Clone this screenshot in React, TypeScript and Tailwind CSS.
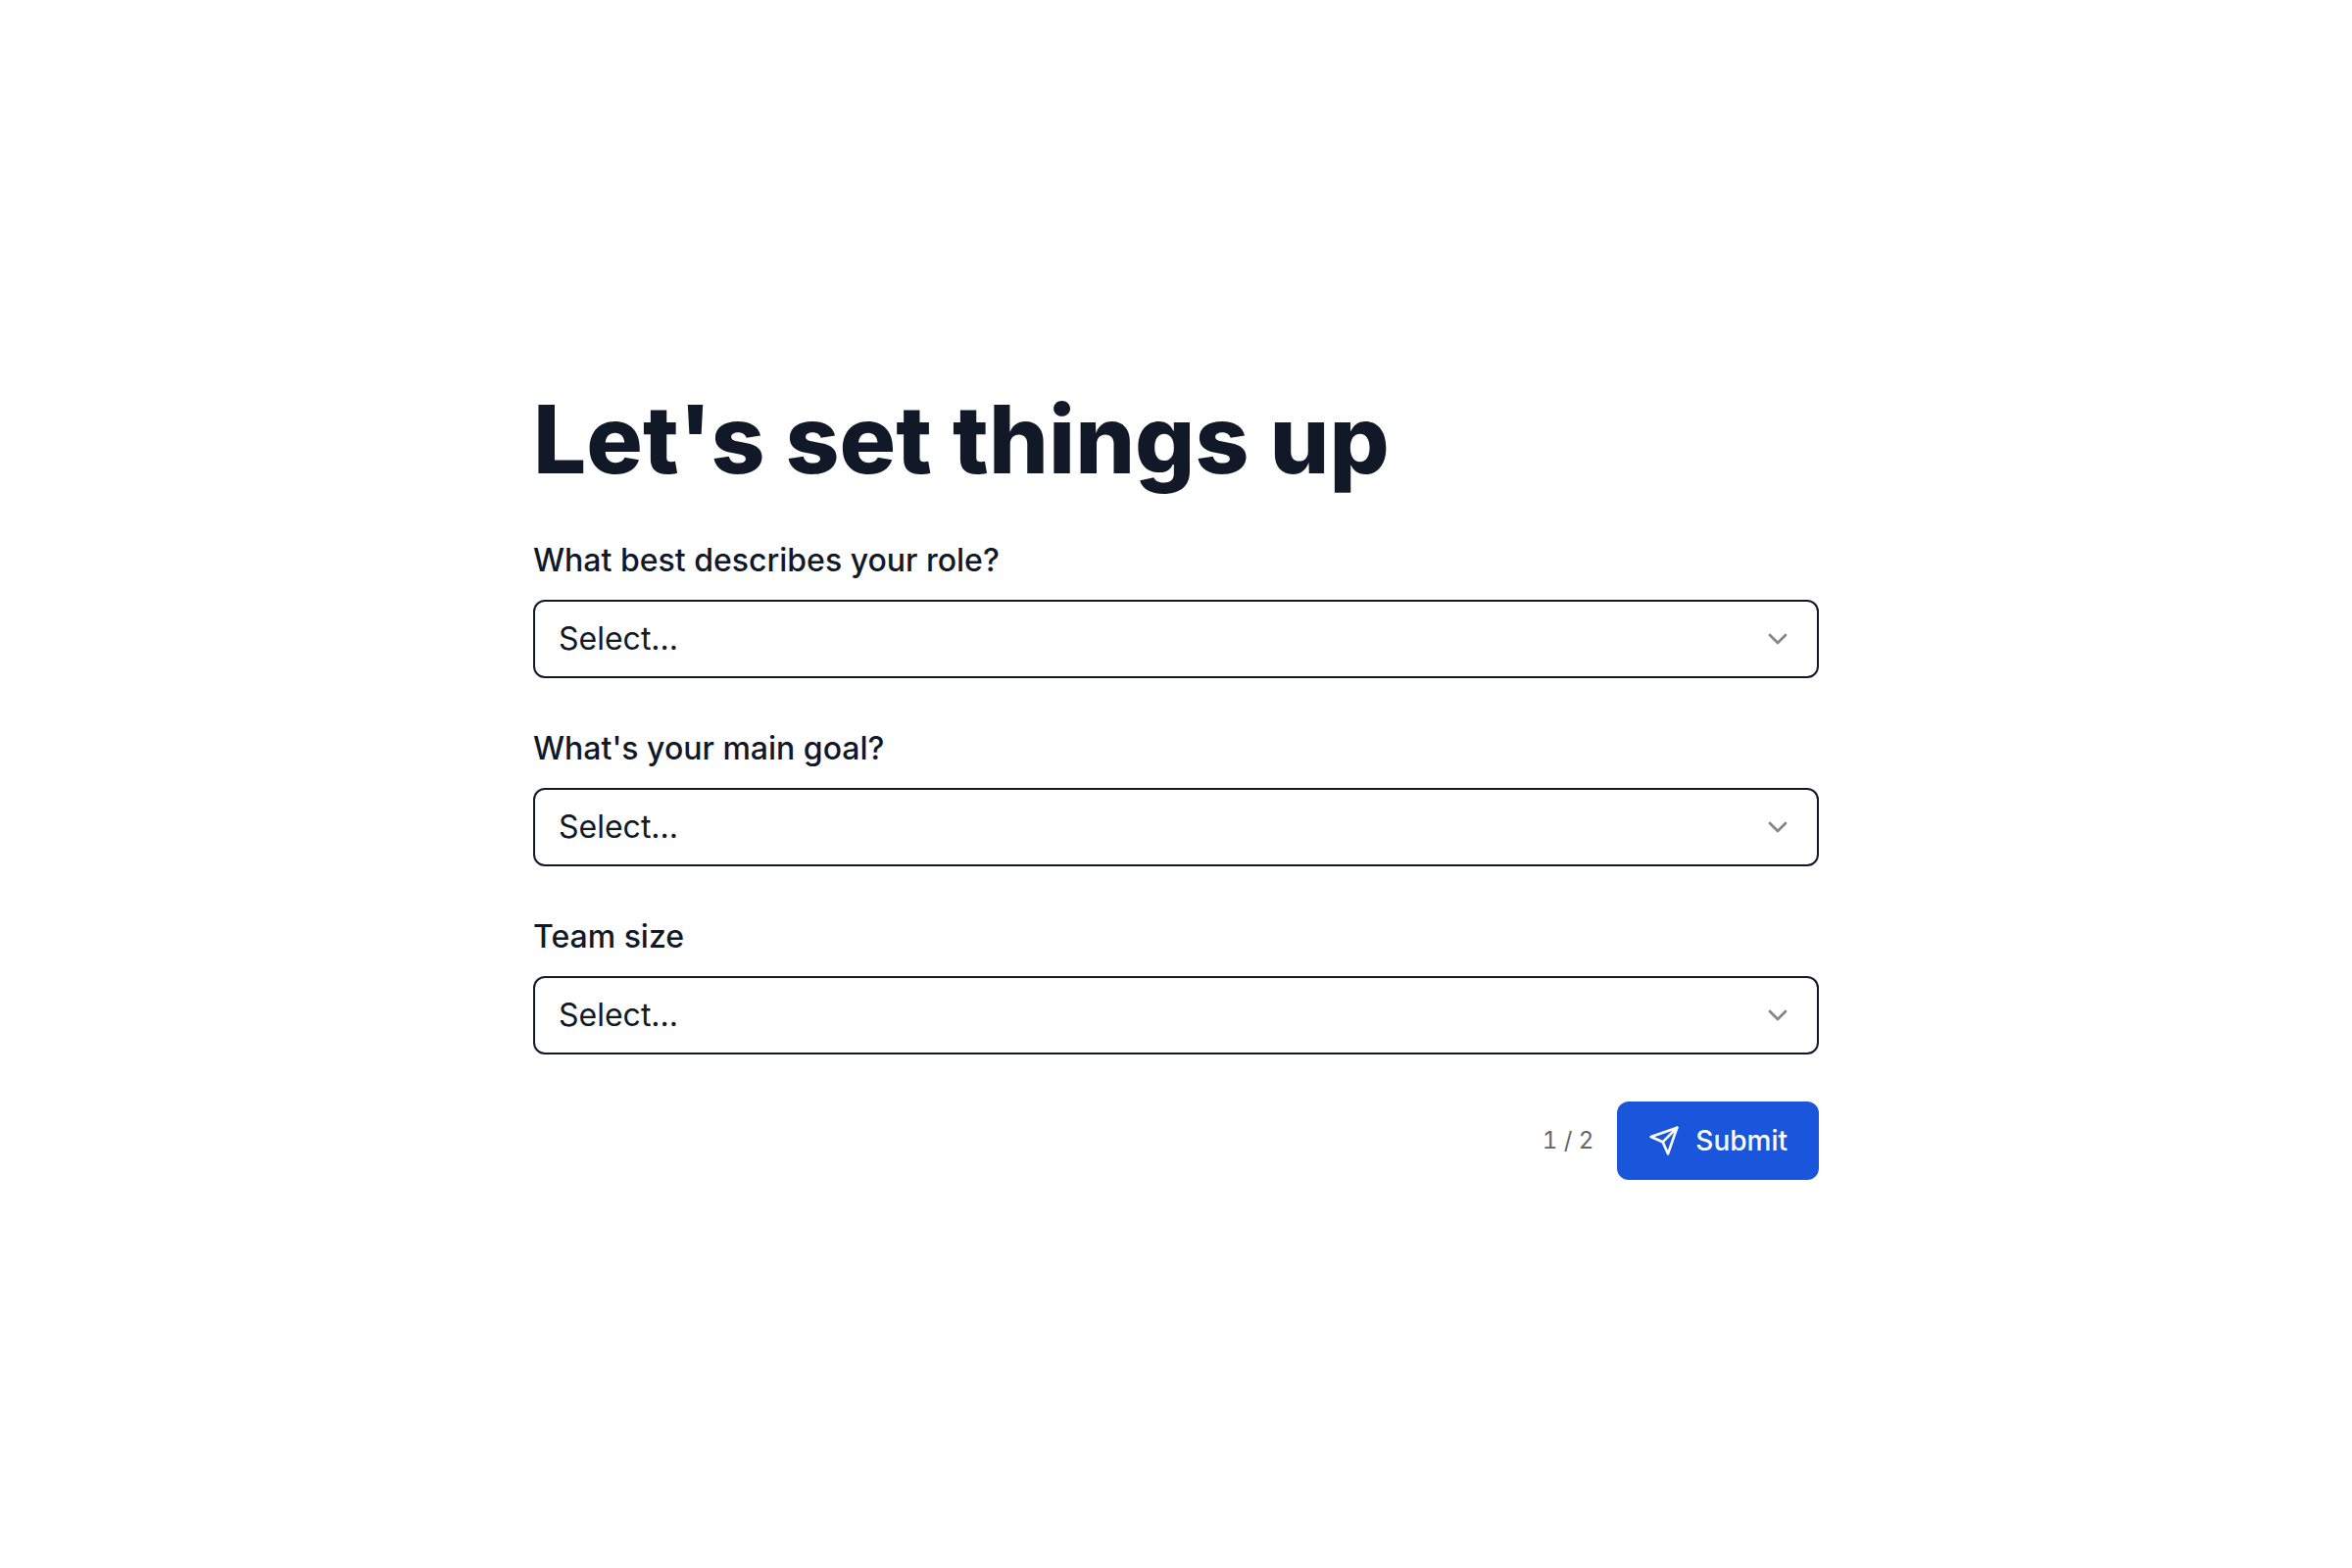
import { useState } from "react";
import type { FormEvent } from "react";
import { ChevronDown } from "lucide-react";

type Question = {
    id: string;
    label: string;
    options: string[];
};

const QUESTIONS: Question[] = [
    {
        id: "role",
        label: "What best describes your role?",
        options: ["Engineering", "Design", "Product", "Marketing", "Other"],
    },
    {
        id: "goal",
        label: "What's your main goal?",
        options: ["Ship faster", "Collaborate better", "Just exploring"],
    },
    {
        id: "team-size",
        label: "Team size",
        options: ["Just me", "2-10", "11-50", "51+"],
    },
];

function SendIcon() {
    return (
        <svg
            className="size-8"
            viewBox="0 0 24 24"
            fill="none"
            stroke="currentColor"
            strokeWidth={2}
            strokeLinecap="round"
            strokeLinejoin="round"
            aria-hidden="true"
        >
            <path d="m22 2-7 20-4-9-9-4Z" />
            <path d="M22 2 11 13" />
        </svg>
    );
}

type SelectFieldProps = {
    question: Question;
    value: string;
    onChange: (value: string) => void;
};

function SelectField({ question, value, onChange }: SelectFieldProps) {
    return (
        <div className="flex flex-col gap-4">
            <label htmlFor={question.id} className="text-[32px] leading-12 font-medium">
                {question.label}
            </label>
            <div className="grid items-center">
                <select
                    id={question.id}
                    value={value}
                    onChange={e => onChange(e.target.value)}
                    className="col-start-1 row-start-1 h-20 w-full appearance-none rounded-xl border-2 border-[#111827] bg-white px-6 text-[32px] leading-12"
                >
                    <option value="">Select...</option>
                    {question.options.map(option => (
                        <option key={option} value={option}>{option}</option>
                    ))}
                </select>
                <ChevronDown
                    size={32}
                    className="pointer-events-none col-start-1 row-start-1 mr-[26px] justify-self-end text-[#858585]"
                />
            </div>
        </div>
    );
}

export default function App() {
    const [answers, setAnswers] = useState<Record<string, string>>({});

    const handleSubmit = (e: FormEvent) => {
        e.preventDefault();
    };

    return (
        <main className="flex min-h-screen flex-col items-center justify-center bg-white px-8 font-[Inter,sans-serif] text-[#111827]">
            <form onSubmit={handleSubmit} className="w-full max-w-[1312px]">
                <h1 className="text-8xl leading-[104px] font-extrabold">Let's set things up</h1>

                <div className="mt-12 flex flex-col gap-12">
                    {QUESTIONS.map(question => (
                        <SelectField
                            key={question.id}
                            question={question}
                            value={answers[question.id] ?? ""}
                            onChange={value => setAnswers({ ...answers, [question.id]: value })}
                        />
                    ))}
                </div>

                {/* Step counter + submit */}
                <div className="mt-12 flex items-center justify-end gap-6">
                    <span className="text-2xl text-[#666666] tabular-nums">1 / 2</span>
                    <button
                        type="submit"
                        className="flex h-20 items-center gap-4 rounded-xl bg-[#1a56db] px-8 text-[28px] font-medium text-white"
                    >
                        <SendIcon />
                        Submit
                    </button>
                </div>
            </form>
        </main>
    );
}
